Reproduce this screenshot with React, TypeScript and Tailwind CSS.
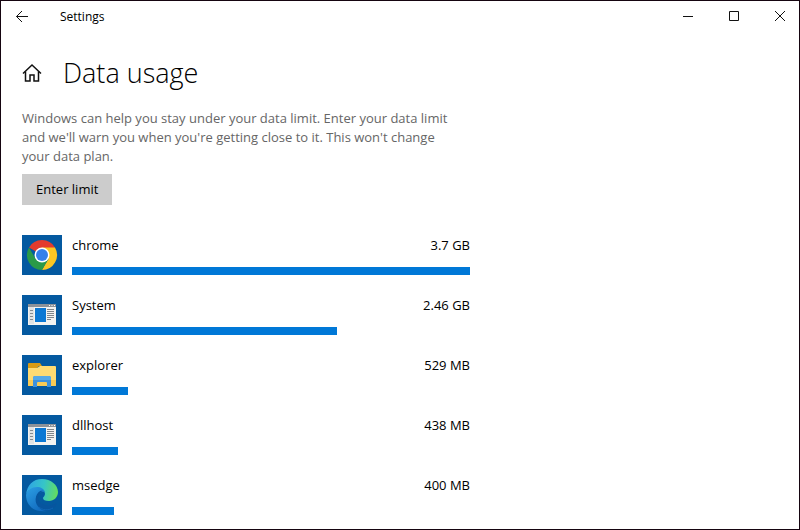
import type { ReactNode } from "react";

type Usage = {
  name: string;
  amount: string;
  percent: number;
  icon: ReactNode;
};

function ChromeIcon() {
  return (
    <svg viewBox="0 0 40 40" className="size-10" aria-hidden="true">
      <path d="M7 12.5A15 15 0 0 1 33 12.5L20 20z" fill="#e33b2e" />
      <path d="M20 12.5H33A15 15 0 0 1 20 35L26.5 23.8z" fill="#fbc723" />
      <path d="M7 12.5L13.5 23.8H26.5L20 35A15 15 0 0 1 7 12.5z" fill="#2a9a48" />
      <circle cx="20" cy="20" r="7.5" fill="#fff" />
      <circle cx="20" cy="20" r="6" fill="#3480ea" />
    </svg>
  );
}

function AppWindowIcon() {
  return (
    <svg viewBox="0 0 40 40" className="size-10" aria-hidden="true">
      <rect x="6" y="9" width="28" height="21" fill="#f3f3f1" />
      <rect x="6" y="9" width="28" height="3" fill="#8c9299" />
      <path d="M27 10.5h1M29.5 10.5h1M32 10.5h1" stroke="#fff" />
      <rect x="7" y="12" width="5" height="17" fill="#e1e3e4" />
      <path d="M8 15.5h3M8 18.5h3M8 21.5h3M8 24.5h3" stroke="#858b90" />
      <rect x="13" y="13" width="11" height="14" fill="#0b78d4" />
      <path
        d="M25 14.5h7M25 16.5h7M25 18.5h7M25 20.5h7M25 22.5h7M25 24.5h4"
        stroke="#7f858a"
      />
    </svg>
  );
}

function FolderIcon() {
  return (
    <svg viewBox="0 0 40 40" className="size-10" aria-hidden="true">
      <path d="M6 9q0-1 1-1h11l2 3h-3l-2 2H6z" fill="#d99b13" />
      <path d="M6 13h9l3-2h15q1 0 1 1v18q0 1-1 1H7q-1 0-1-1z" fill="#ffdb72" />
      <path d="M6 25h28v5q0 1-1 1H7q-1 0-1-1z" fill="#f9cb55" />
      <path
        d="M11 32v-9q0-2 2-2h14q2 0 2 2v9h-4v-4q0-1-1-1h-8q-1 0-1 1v4z"
        fill="#3c91dd"
      />
      <path d="M11 25v-2q0-2 2-2h14q2 0 2 2v2z" fill="#56a9e6" />
    </svg>
  );
}

function EdgeIcon() {
  return (
    <svg viewBox="0 0 40 40" className="size-10" aria-hidden="true">
      <defs>
        <linearGradient id="edgeTop" x1="5" y1="14" x2="36" y2="20" gradientUnits="userSpaceOnUse">
          <stop offset="0" stopColor="#2fa5e4" />
          <stop offset="0.5" stopColor="#36c5c8" />
          <stop offset="1" stopColor="#67df58" />
        </linearGradient>
        <linearGradient id="edgeLeft" x1="5" y1="16" x2="20" y2="36" gradientUnits="userSpaceOnUse">
          <stop offset="0" stopColor="#2898df" />
          <stop offset="1" stopColor="#1068bd" />
        </linearGradient>
      </defs>
      <path
        d="M4 20C5 10 11 4 20 4c9 0 16 6 16 13 0 5-4 9-9 9-4 0-6-1-6-3 0-1 2-2 2-4 0-3-3-6-8-6-6 0-10 3-11 7z"
        fill="url(#edgeTop)"
      />
      <path
        d="M4 20c1-5 6-8 11-8 4 0 7 2 8 5-8-2-12 8-6 14 2 3 5 4 8 5-12 2-21-5-21-16z"
        fill="url(#edgeLeft)"
      />
      <path
        d="M14 22c-2 7 4 14 11 14 4-1 7-3 9-6 1-1 0-2-1-1-8 4-17 0-17-7 0-3 2-5 5-6-3-1-6 2-7 6z"
        fill="#07559f"
      />
      <path d="M17 32c3 3 9 4 14 1" fill="none" stroke="#1065b4" />
    </svg>
  );
}

const apps: Usage[] = [
  { name: "chrome", amount: "3.7 GB", percent: 100, icon: <ChromeIcon /> },
  { name: "System", amount: "2.46 GB", percent: 66.6, icon: <AppWindowIcon /> },
  { name: "explorer", amount: "529 MB", percent: 14.1, icon: <FolderIcon /> },
  { name: "dllhost", amount: "438 MB", percent: 11.6, icon: <AppWindowIcon /> },
  { name: "msedge", amount: "400 MB", percent: 10.6, icon: <EdgeIcon /> },
];

function TitleBar() {
  return (
    <header className="flex h-8 items-center justify-between">
      <div className="flex h-full items-center">
        <button aria-label="Back" className="flex h-full w-[42px] items-center justify-center">
          <svg viewBox="0 0 14 14" className="size-3.5" fill="none" stroke="#111">
            <path d="M13 6.5H1.5M7 1L1.5 6.5L7 12" />
          </svg>
        </button>
        <span className="ml-[17px] text-xs">Settings</span>
      </div>
      <div className="flex h-full pb-0.5">
        <button aria-label="Minimize" className="flex w-[46px] items-center justify-center">
          <svg viewBox="0 0 10 10" className="size-2.5" stroke="#111">
            <path d="M0 5.5h10" />
          </svg>
        </button>
        <button aria-label="Maximize" className="flex w-[46px] items-center justify-center">
          <svg viewBox="0 0 10 10" className="size-2.5" fill="none" stroke="#111">
            <path d="M.5.5h9v9h-9z" />
          </svg>
        </button>
        <button aria-label="Close" className="flex w-[42px] items-center justify-end pr-3.5">
          <svg viewBox="0 0 10 10" className="size-2.5" stroke="#111">
            <path d="M0 0l10 10M10 0L0 10" />
          </svg>
        </button>
      </div>
    </header>
  );
}

function UsageRow({ name, amount, percent, icon }: Usage) {
  return (
    <li className="flex h-10 gap-2.5">
      <div className="size-10 shrink-0 bg-[#0459a0]">{icon}</div>
      <div className="flex flex-1 flex-col justify-between">
        <div className="flex justify-between text-[13px] leading-5">
          <span>{name}</span>
          <span>{amount}</span>
        </div>
        <div className="h-2 bg-[#0078d7]" style={{ width: `${percent}%` }} />
      </div>
    </li>
  );
}

export default function App() {
  return (
    <div className="min-h-screen border border-[#150510] bg-white font-['Open_Sans','Noto_Sans',sans-serif] text-black">
      <TitleBar />
      <main className="max-w-[469px] pl-[21px]">
        <div className="mt-5 flex h-10 items-center gap-[21px]">
          <a href="#home" aria-label="Home">
            <svg viewBox="0 0 20 20" className="size-5" fill="none" stroke="#111" strokeWidth="1.5">
              <path d="M1 10.5L10 2L19 10.5" />
              <path d="M3.5 8.5V18H8V12H12V18H16.5V8.5" />
            </svg>
          </a>
          <h1 className="text-[27px] leading-10 font-light">Data usage</h1>
        </div>

        <p className="mt-4 pr-2.5 text-[13px] leading-[19px] text-[#666]">
          Windows can help you stay under your data limit. Enter your data limit
          and we'll warn you when you're getting close to it. This won't change
          your data plan.
        </p>
        <button className="mt-2 h-[31px] bg-[#ccc] px-3.5 text-[13px]">Enter limit</button>

        <ul className="mt-[30px] flex flex-col gap-5">
          {apps.map((app) => (
            <UsageRow key={app.name} {...app} />
          ))}
        </ul>
      </main>
    </div>
  );
}
